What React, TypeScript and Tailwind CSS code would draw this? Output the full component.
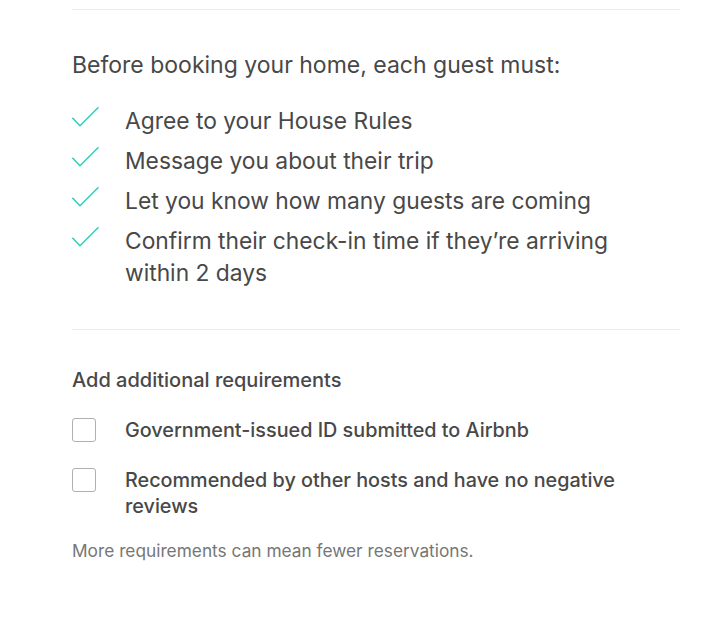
const rules = [
  'Agree to your House Rules',
  'Message you about their trip',
  'Let you know how many guests are coming',
  'Confirm their check-in time if they’re arriving within 2 days',
]

const extras = [
  'Government-issued ID submitted to Airbnb',
  'Recommended by other hosts and have no negative reviews',
]

function CheckMark() {
  return (
    <svg className="h-[24px] w-[28px] shrink-0" viewBox="0 0 28 24" fill="none">
      <polyline points="0.8,13.3 8,20.7 26,2.7" stroke="#33cfc1" strokeWidth={1.6} strokeLinecap="round" strokeLinejoin="round" />
    </svg>
  )
}

export default function App() {
  return (
    <div className="min-h-[628px] w-[701px] bg-white pl-[72px] pr-[21px] text-[#484848] font-['Inter',sans-serif]">
      <div className="pt-[9px]">
        <div className="border-t border-[#ebebeb]" />
      </div>

      {/* Requirements */}
      <div className="pt-[39px] pb-[40px]">
        <h2 className="text-[23px] leading-[32px] font-normal">Before booking your home, each guest must:</h2>
        <ul className="mt-[24px] flex flex-col gap-[8px]">
          {rules.map((rule) => (
            <li key={rule} className="flex items-start">
              <CheckMark />
              <span className="ml-[25px] max-w-[500px] text-[22.8px] leading-[32px] font-normal">{rule}</span>
            </li>
          ))}
        </ul>
      </div>

      <div className="border-t border-[#ebebeb]" />

      {/* Additional */}
      <div className="pt-[37px]">
        <h3 className="text-[20px] leading-[26px] font-medium">Add additional requirements</h3>
        <div className="mt-[24px] flex flex-col gap-[24px]">
          {extras.map((item) => (
            <label key={item} className="flex items-start">
              <span className="mt-[1px] h-[24px] w-[24px] shrink-0 rounded-[3px] border border-[#b0b0b0]" />
              <span className="ml-[29px] text-[19.8px] leading-[26px] font-medium">{item}</span>
            </label>
          ))}
        </div>
        <p className="mt-[21px] text-[17.3px] leading-[22px] text-[#767676]">More requirements can mean fewer reservations.</p>
      </div>
    </div>
  )
}
